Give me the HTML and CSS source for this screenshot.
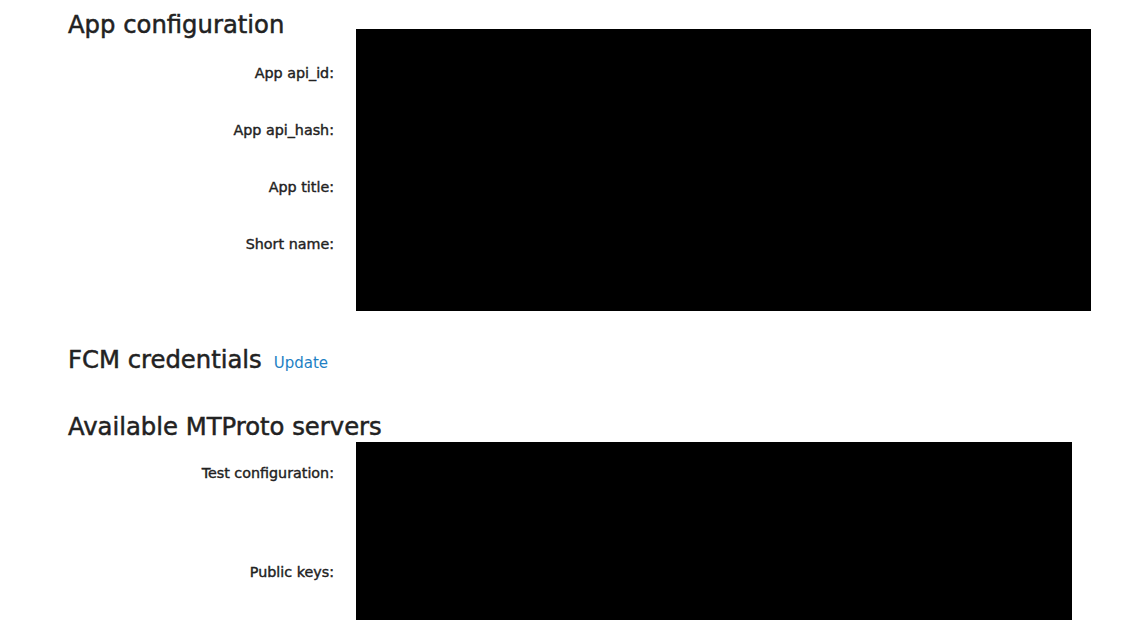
FILE: index.html
```html
<!DOCTYPE html>
<html>
<head>
<meta charset="utf-8">
<link rel="stylesheet" href="styles.css">
</head>
<body>
<div class="page">
  <h2 class="heading first">App configuration</h2>
  <div class="form form-app">
    <div class="labels">
      <div class="label">App api_id:</div>
      <div class="label">App api_hash:</div>
      <div class="label">App title:</div>
      <div class="label">Short name:</div>
    </div>
    <div class="box box-app"></div>
  </div>

  <h2 class="heading fcm">FCM credentials <a class="link" href="#">Update</a></h2>

  <h2 class="heading mt">Available MTProto servers</h2>
  <div class="form form-mt">
    <div class="labels labels-mt">
      <div class="label">Test configuration:</div>
      <div class="label">Public keys:</div>
    </div>
    <div class="box box-mt"></div>
  </div>
</div>
</body>
</html>
```
FILE: styles.css
```css
html, body {
  margin: 0;
  padding: 0;
  background: #fff;
}
body {
  font-family: "DejaVu Sans", Verdana, sans-serif;
  color: #222;
}
.page {
  padding-left: 68px;
}
.heading {
  margin: 0;
  font-size: 24.3px;
  font-weight: normal;
  line-height: 30px;
  color: #222;
  -webkit-text-stroke: 0.5px #222;
}
.heading.first {
  padding-top: 10px;
  margin-bottom: -11px;
}
.form {
  display: flex;
  gap: 22px;
}
.labels {
  width: 266px;
  text-align: right;
  display: flex;
  flex-direction: column;
  padding-top: 30px;
  gap: 29px;
}
.label {
  font-size: 14.3px;
  line-height: 28px;
  font-weight: normal;
  color: #222;
  -webkit-text-stroke: 0.4px #222;
}
.labels-mt {
  padding-top: 17px;
  gap: 71px;
}
.box {
  background: #000;
}
.box-app {
  width: 735px;
  height: 282px;
}
.box-mt {
  width: 716px;
  height: 178px;
}
.fcm {
  margin-top: 34px;
  display: flex;
  align-items: baseline;
  gap: 12px;
}
.link {
  font-size: 15px;
  color: #1e7fc4;
  text-decoration: none;
  -webkit-text-stroke: 0;
}
.mt {
  margin-top: 34px;
  margin-bottom: 0;
}
```
